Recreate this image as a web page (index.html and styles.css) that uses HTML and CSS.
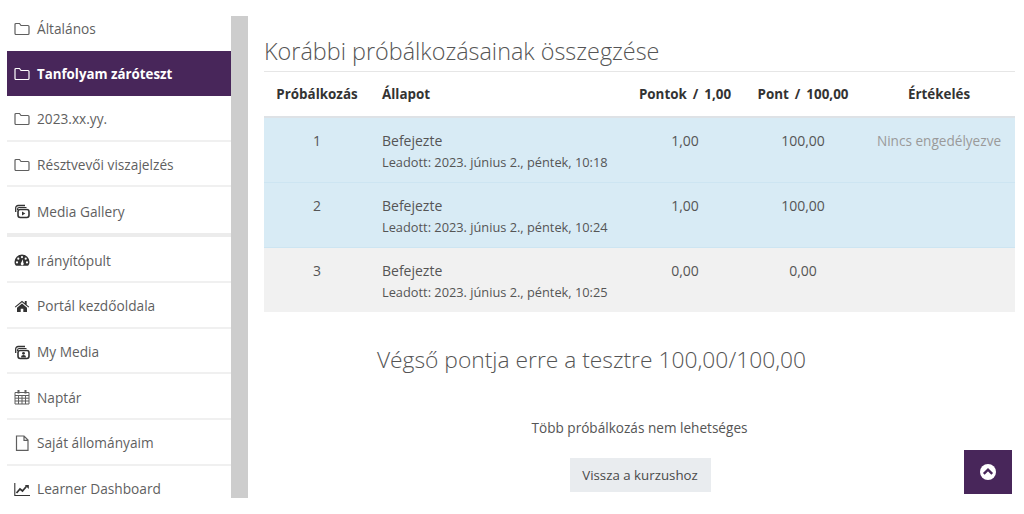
FILE: index.html
```html
<!DOCTYPE html>
<html lang="en">

<head>
  <meta charset="UTF-8">
  <title>Korábbi próbálkozások</title>
  <link rel="stylesheet" href="styles.css">
</head>

<body>

  <div class="sidebar">
    <ul class="nav">
      <li class="nav__item nav__item--first">
        <svg class="nav__icon" viewBox="0 0 16 16"><path d="M1 12.500v-9a1 1 0 0 1 1-1h3.500l1.500 2h7a1 1 0 0 1 1 1v7a1 1 0 0 1-1 1H2a1 1 0 0 1-1-1z" fill="none" stroke="currentColor" stroke-width="1.200"/></svg>
        Általános
      </li>
      <li class="nav__item nav__item--active">
        <svg class="nav__icon" viewBox="0 0 16 16"><path d="M1 12.500v-9a1 1 0 0 1 1-1h3.500l1.500 2h7a1 1 0 0 1 1 1v7a1 1 0 0 1-1 1H2a1 1 0 0 1-1-1z" fill="none" stroke="currentColor" stroke-width="1.200"/></svg>
        <span class="nav__bold">Tanfolyam záróteszt</span>
      </li>
      <li class="nav__item">
        <svg class="nav__icon" viewBox="0 0 16 16"><path d="M1 12.500v-9a1 1 0 0 1 1-1h3.500l1.500 2h7a1 1 0 0 1 1 1v7a1 1 0 0 1-1 1H2a1 1 0 0 1-1-1z" fill="none" stroke="currentColor" stroke-width="1.200"/></svg>
        2023.xx.yy.
      </li>
      <li class="nav__item">
        <svg class="nav__icon" viewBox="0 0 16 16"><path d="M1 12.500v-9a1 1 0 0 1 1-1h3.500l1.500 2h7a1 1 0 0 1 1 1v7a1 1 0 0 1-1 1H2a1 1 0 0 1-1-1z" fill="none" stroke="currentColor" stroke-width="1.200"/></svg>
        Résztvevői viszajelzés
      </li>
      <li class="nav__item nav__item--last">
        <svg class="nav__icon nav__icon--dark" viewBox="0 0 16 16"><path d="M1.700 9V5a2.500 2.500 0 0 1 2.500-2.500H11" fill="none" stroke="currentColor" stroke-width="1.300"/><path d="M3.600 7V6a1.500 1.500 0 0 1 1.500-1.500h7.400" fill="none" stroke="currentColor" stroke-width="1.200"/><rect x="4" y="6.500" width="11" height="8" rx="2.200" fill="none" stroke="currentColor" stroke-width="1.600"/><path d="M8 8.500l3.300 2-3.300 2z" fill="currentColor"/></svg>
        Media Gallery
      </li>
      <li class="nav__item">
        <svg class="nav__icon nav__icon--dark" viewBox="0 0 16 16"><path fill-rule="evenodd" d="M8 2.500a7.500 7.500 0 0 0-7.500 7.500c0 1.200.3 2.300 1 3.300.2.300.5.400.8.400h11.400c.3 0 .6-.1.800-.4.700-1 1-2.100 1-3.300A7.500 7.500 0 0 0 8 2.500zM8 4a1.100 1.100 0 1 1 0 2.200A1.100 1.100 0 0 1 8 4zM4.300 5.600a1.100 1.100 0 1 1 0 2.200 1.100 1.100 0 0 1 0-2.200zm7.400 0a1.100 1.100 0 1 1 0 2.200 1.100 1.100 0 0 1 0-2.200zM3 9.300a1.100 1.100 0 1 1 0 2.200 1.100 1.100 0 0 1 0-2.200zm10 0a1.100 1.100 0 1 1 0 2.200 1.100 1.100 0 0 1 0-2.200zM8.900 7.300l.4 3.400a1.500 1.500 0 1 1-2.300.2z" fill="currentColor"/></svg>
        Irányítópult
      </li>
      <li class="nav__item">
        <svg class="nav__icon nav__icon--dark" viewBox="0 0 16 16"><path d="M8 2.800L.8 8.700l.7.800L8 4.300l6.500 5.200.7-.8-2.500-2V3h-1.900v2.100zM3 9.700V14h3.700v-3.200h2.600V14H13V9.700L8 5.500z" fill="currentColor"/></svg>
        Portál kezdőoldala
      </li>
      <li class="nav__item">
        <svg class="nav__icon nav__icon--dark" viewBox="0 0 16 16"><path d="M1.700 9V5a2.500 2.500 0 0 1 2.500-2.500H11" fill="none" stroke="currentColor" stroke-width="1.300"/><path d="M3.600 7V6a1.500 1.500 0 0 1 1.500-1.500h7.400" fill="none" stroke="currentColor" stroke-width="1.200"/><rect x="4" y="6.500" width="11" height="8" rx="2.200" fill="none" stroke="currentColor" stroke-width="1.600"/><circle cx="9.500" cy="9.300" r="1.400" fill="currentColor"/><path d="M7 13.500c0-1.700 1-2.500 2.500-2.500s2.500.8 2.500 2.500z" fill="currentColor"/></svg>
        My Media
      </li>
      <li class="nav__item">
        <svg class="nav__icon" viewBox="0 0 16 16"><path d="M1 3.500h14v11.500H1zM1 6.500h14M1 9.200h14M1 12h14M4.500 6.500V15M8 6.500V15M11.500 6.500V15" fill="none" stroke="currentColor" stroke-width="1"/><path d="M4.500 1v3.500M11.500 1v3.500" stroke="currentColor" stroke-width="2"/></svg>
        Naptár
      </li>
      <li class="nav__item">
        <svg class="nav__icon" viewBox="0 0 16 16"><path d="M2.500 1h7.500l4 4v10.400H2.500zM10 1v4.300h4" fill="none" stroke="currentColor" stroke-width="1.200"/></svg>
        Saját állományaim
      </li>
      <li class="nav__item">
        <svg class="nav__icon nav__icon--dark" viewBox="0 0 16 16"><path d="M.8 2v12.500H16" fill="none" stroke="currentColor" stroke-width="1.100"/><path d="M2.500 12l3.500-4 2.500 2 4-4.700" fill="none" stroke="currentColor" stroke-width="1.700"/><path d="M10.800 4h4v4z" fill="currentColor"/></svg>
        Learner Dashboard
      </li>
    </ul>
    <div class="scrollbar"></div>
  </div>

  <div class="main">
    <h3 class="main__title">Korábbi próbálkozásainak összegzése</h3>

    <table class="attempts">
      <thead>
        <tr>
          <th class="col-attempt">Próbálkozás</th>
          <th class="col-state">Állapot</th>
          <th class="col-points">Pontok / 1,00</th>
          <th class="col-grade">Pont / 100,00</th>
          <th class="col-review">Értékelés</th>
        </tr>
      </thead>
      <tbody>
        <tr class="row--best">
          <td>1</td>
          <td class="col-state">Befejezte<div class="submitted">Leadott: 2023. június 2., péntek, 10:18</div></td>
          <td>1,00</td>
          <td>100,00</td>
          <td class="muted">Nincs engedélyezve</td>
        </tr>
        <tr class="row--best">
          <td>2</td>
          <td class="col-state">Befejezte<div class="submitted">Leadott: 2023. június 2., péntek, 10:24</div></td>
          <td>1,00</td>
          <td>100,00</td>
          <td></td>
        </tr>
        <tr class="row--plain">
          <td>3</td>
          <td class="col-state">Befejezte<div class="submitted">Leadott: 2023. június 2., péntek, 10:25</div></td>
          <td>0,00</td>
          <td>0,00</td>
          <td></td>
        </tr>
      </tbody>
    </table>

    <h3 class="final">Végső pontja erre a tesztre 100,00/100,00</h3>
    <p class="notice">Több próbálkozás nem lehetséges</p>
    <div class="actions"><button class="btn">Vissza a kurzushoz</button></div>
  </div>

  <a class="to-top">
    <svg viewBox="0 0 16 16" width="16" height="16"><circle cx="8" cy="8" r="8" fill="#fff"/><path d="M3.800 9.800L8 5.700l4.200 4.100" fill="none" stroke="#48265a" stroke-width="2.400"/></svg>
  </a>

</body>

</html>
```

FILE: styles.css
```css
html,
body {
  height: 100%;
}

body {
  margin: 0;
  height: 514px;
  overflow: hidden;
  display: flex;
  align-items: flex-start;
  font-family: "Open Sans", sans-serif;
  font-size: 14px;
  color: #555;
  background-color: #fff;
}

.sidebar {
  display: flex;
  flex: none;
  width: 241px;
  height: 498px;
  padding-left: 7px;
  overflow: hidden;
}

.nav {
  list-style: none;
  margin: 0;
  padding: 6px 0 0;
  width: 224px;
  flex: none;
  font-size: 13.700px;
}

.nav__item {
  display: flex;
  align-items: center;
  gap: 7px;
  box-sizing: border-box;
  height: 45.700px;
  padding: 2px 0 0 7px;
  border-bottom: 2px solid #f0f0f0;
  color: #5f5f5f;
  white-space: nowrap;
}

.nav__item--first {
  height: 45px;
  padding-top: 0;
  border-bottom: 0;
}

.nav__item--active {
  height: 45px;
  padding-top: 0;
  background-color: #48265a;
  border-bottom: 0;
  color: #fff;
}

.nav__bold {
  font-size: 13.300px;
  font-weight: 700;
}

.nav__item--last {
  height: 50px;
  border-bottom: 4px solid #ececec;
}

.nav__icon {
  width: 16px;
  height: 16px;
  flex: none;
}

.nav__icon--dark {
  color: #333;
}

.scrollbar {
  width: 17px;
  flex: none;
  margin-top: 16px;
  background-color: #cdcdcd;
}

.main {
  flex: none;
  width: 751px;
  margin-left: 16px;
}

.main__title {
  margin: 37px 0 0;
  padding-bottom: 6px;
  border-bottom: 1px solid #e6e6e6;
  font-size: 23.400px;
  font-weight: 300;
  line-height: 28px;
}

.attempts {
  width: 751px;
  table-layout: fixed;
  border-collapse: collapse;
}

.attempts th {
  box-sizing: border-box;
  height: 45px;
  padding: 0;
  border-bottom: 2px solid #dee2e6;
  color: #333;
  font-size: 13.400px;
  font-weight: 700;
  word-spacing: 2.500px;
  text-align: center;
  white-space: nowrap;
}

.attempts td {
  box-sizing: border-box;
  height: 65px;
  padding: 12px 0 0;
  vertical-align: top;
  text-align: center;
  line-height: 21px;
}

.attempts th.col-state,
.attempts td.col-state {
  padding-left: 12px;
  text-align: left;
}

.col-attempt {
  width: 106px;
}

.col-points {
  width: 116px;
}

.col-grade {
  width: 120px;
}

.col-review {
  width: 152px;
}

.row--best {
  background-color: #d8ebf5;
  border-bottom: 1px solid #cde5f2;
}

.row--plain {
  background-color: #f1f1f1;
}

.submitted {
  margin-top: 1px;
  font-size: 12.800px;
  white-space: nowrap;
}

.attempts td.muted {
  color: #9a9a9a;
  font-size: 13.600px;
}

.final {
  margin: 33px 0 0;
  padding-right: 96px;
  font-size: 22.800px;
  font-weight: 300;
  line-height: 30px;
  text-align: center;
}

.notice {
  margin: 43px 0 0;
  font-size: 13.600px;
  text-align: center;
  line-height: 20px;
}

.actions {
  margin-top: 20px;
  padding-left: 1px;
  text-align: center;
}

.btn {
  width: 141px;
  height: 34px;
  padding: 0;
  border: 0;
  background-color: #e9ecef;
  color: #4a4a4a;
  font-family: inherit;
  font-size: 13.300px;
}

.to-top {
  position: fixed;
  left: 964px;
  top: 450px;
  width: 48px;
  height: 44px;
  display: flex;
  align-items: center;
  justify-content: center;
  background-color: #48265a;
}
```
